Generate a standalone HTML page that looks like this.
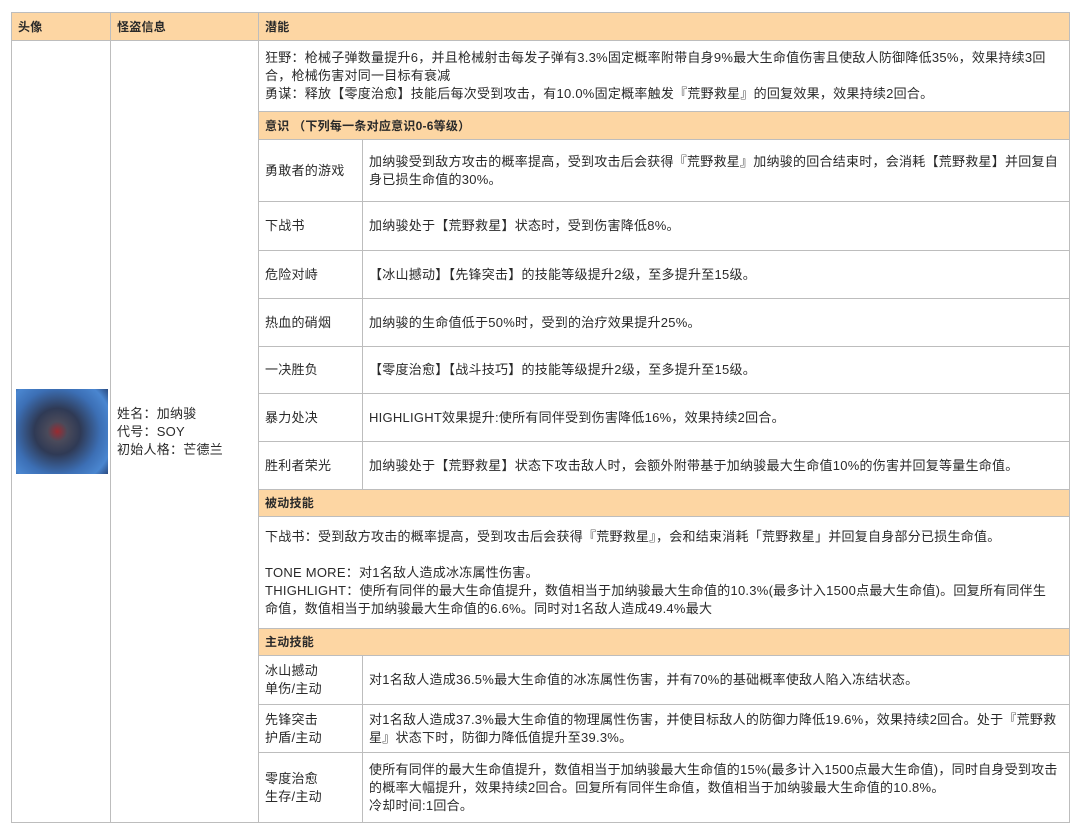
<!DOCTYPE html>
<html><head><meta charset="utf-8"><style>
body{margin:0;width:1080px;height:835px;background:#fff;position:relative;font-family:"Liberation Sans","Noto Sans CJK SC",sans-serif;font-size:13px;letter-spacing:0.25px;color:#2a2a2a;overflow:hidden}
.c{position:absolute;box-sizing:border-box;border-left:1px solid #bdbdbd;border-top:1px solid #bdbdbd;padding-left:6px;display:flex;align-items:center;line-height:18px}
.h{background:#fdd6a3;font-weight:bold;font-size:12px}
.frame{position:absolute;left:11px;top:12px;width:1059px;height:811px;border-right:1px solid #bdbdbd;border-bottom:1px solid #bdbdbd;box-sizing:border-box}
</style></head><body>
<div class="frame"></div>
<div class="c h" style="left:11px;top:12px;width:99px;height:28px">头像</div>
<div class="c h" style="left:110px;top:12px;width:148px;height:28px">怪盗信息</div>
<div class="c h" style="left:258px;top:12px;width:811px;height:28px">潜能</div>
<div class="c" style="left:11px;top:40px;width:99px;height:782px;padding-left:4px">
<div style="width:92px;height:85px;background:radial-gradient(circle at 45% 50%,#9a2a30 0,#4a4a5a 15%,#2f3a55 35%,#3c6fb5 65%,#4a86d0 85%,#2a4a80 100%)"></div></div>
<div class="c" style="left:110px;top:40px;width:148px;height:782px">姓名：加纳骏<br>代号：SOY<br>初始人格：芒德兰</div>
<div class="c" style="left:258px;top:40px;width:811px;height:71px;padding-right:10px">狂野：枪械子弹数量提升6，并且枪械射击每发子弹有3.3%固定概率附带自身9%最大生命值伤害且使敌人防御降低35%，效果持续3回合，枪械伤害对同一目标有衰减<br>勇谋：释放【零度治愈】技能后每次受到攻击，有10.0%固定概率触发『荒野救星』的回复效果，效果持续2回合。</div>
<div class="c h" style="left:258px;top:111px;width:811px;height:28px">意识 （下列每一条对应意识0-6等级）</div>
<div class="c" style="left:258px;top:139px;width:104px;height:62px">勇敢者的游戏</div>
<div class="c" style="left:362px;top:139px;width:707px;height:62px;padding-right:8px">加纳骏受到敌方攻击的概率提高，受到攻击后会获得『荒野救星』加纳骏的回合结束时，会消耗【荒野救星】并回复自身已损生命值的30%。</div>
<div class="c" style="left:258px;top:201px;width:104px;height:49px">下战书</div>
<div class="c" style="left:362px;top:201px;width:707px;height:49px">加纳骏处于【荒野救星】状态时，受到伤害降低8%。</div>
<div class="c" style="left:258px;top:250px;width:104px;height:48px">危险对峙</div>
<div class="c" style="left:362px;top:250px;width:707px;height:48px">【冰山撼动】【先锋突击】的技能等级提升2级，至多提升至15级。</div>
<div class="c" style="left:258px;top:298px;width:104px;height:48px">热血的硝烟</div>
<div class="c" style="left:362px;top:298px;width:707px;height:48px">加纳骏的生命值低于50%时，受到的治疗效果提升25%。</div>
<div class="c" style="left:258px;top:346px;width:104px;height:47px">一决胜负</div>
<div class="c" style="left:362px;top:346px;width:707px;height:47px">【零度治愈】【战斗技巧】的技能等级提升2级，至多提升至15级。</div>
<div class="c" style="left:258px;top:393px;width:104px;height:48px">暴力处决</div>
<div class="c" style="left:362px;top:393px;width:707px;height:48px">HIGHLIGHT效果提升:使所有同伴受到伤害降低16%，效果持续2回合。</div>
<div class="c" style="left:258px;top:441px;width:104px;height:48px">胜利者荣光</div>
<div class="c" style="left:362px;top:441px;width:707px;height:48px">加纳骏处于【荒野救星】状态下攻击敌人时，会额外附带基于加纳骏最大生命值10%的伤害并回复等量生命值。</div>
<div class="c h" style="left:258px;top:489px;width:811px;height:27px">被动技能</div>
<div class="c" style="left:258px;top:516px;width:811px;height:112px;padding-right:10px">下战书：受到敌方攻击的概率提高，受到攻击后会获得『荒野救星』，会和结束消耗「荒野救星」并回复自身部分已损生命值。<br><br>TONE MORE：对1名敌人造成冰冻属性伤害。<br>THIGHLIGHT：使所有同伴的最大生命值提升，数值相当于加纳骏最大生命值的10.3%(最多计入1500点最大生命值)。回复所有同伴生命值，数值相当于加纳骏最大生命值的6.6%。同时对1名敌人造成49.4%最大</div>
<div class="c h" style="left:258px;top:628px;width:811px;height:27px">主动技能</div>
<div class="c" style="left:258px;top:655px;width:104px;height:49px">冰山撼动<br>单伤/主动</div>
<div class="c" style="left:362px;top:655px;width:707px;height:49px">对1名敌人造成36.5%最大生命值的冰冻属性伤害，并有70%的基础概率使敌人陷入冻结状态。</div>
<div class="c" style="left:258px;top:704px;width:104px;height:48px">先锋突击<br>护盾/主动</div>
<div class="c" style="left:362px;top:704px;width:707px;height:48px;padding-right:10px">对1名敌人造成37.3%最大生命值的物理属性伤害，并使目标敌人的防御力降低19.6%，效果持续2回合。处于『荒野救星』状态下时，防御力降低值提升至39.3%。</div>
<div class="c" style="left:258px;top:752px;width:104px;height:70px">零度治愈<br>生存/主动</div>
<div class="c" style="left:362px;top:752px;width:707px;height:70px;padding-right:10px">使所有同伴的最大生命值提升，数值相当于加纳骏最大生命值的15%(最多计入1500点最大生命值)，同时自身受到攻击的概率大幅提升，效果持续2回合。回复所有同伴生命值，数值相当于加纳骏最大生命值的10.8%。<br>冷却时间:1回合。</div>
</body></html>
